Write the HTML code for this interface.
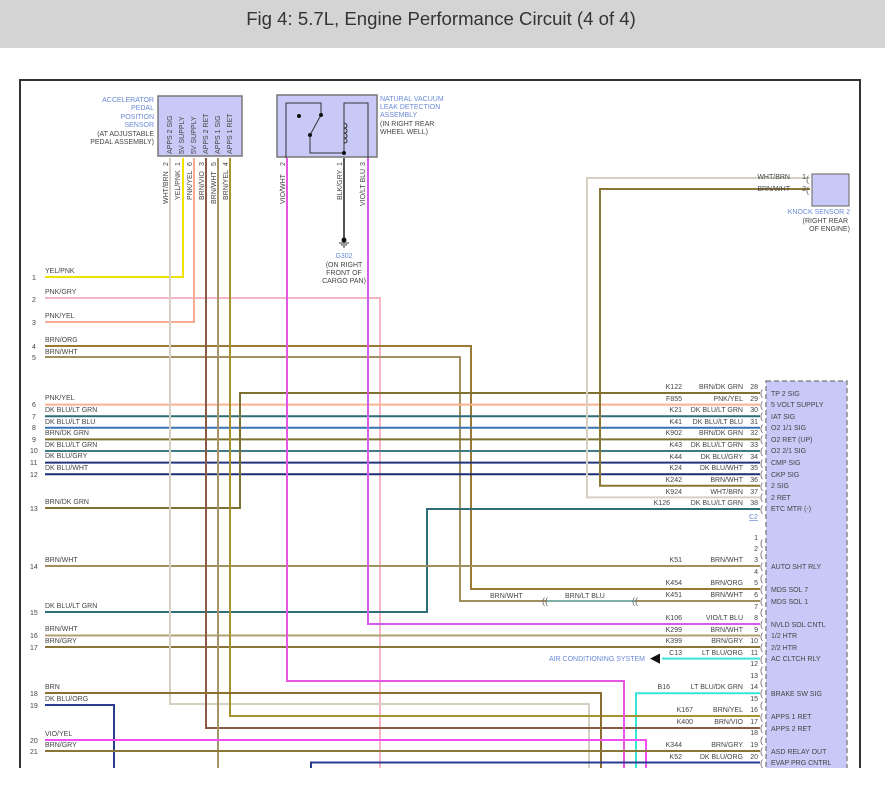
<!DOCTYPE html>
<html><head><meta charset="utf-8"><style>
html,body{margin:0;padding:0;background:#fff;width:885px;height:797px;overflow:hidden}
svg{display:block}
text{font-family:"Liberation Sans",sans-serif}
</style></head><body>
<svg width="885" height="797" viewBox="0 0 885 797" xmlns="http://www.w3.org/2000/svg">
<rect x="0" y="0" width="885" height="48" fill="#d4d4d4"/>
<text x="441" y="25" font-size="18.6" fill="#333" text-anchor="middle">Fig 4: 5.7L, Engine Performance Circuit (4 of 4)</text>
<defs><clipPath id="c"><rect x="20" y="80" width="840" height="688"/></clipPath></defs>
<g clip-path="url(#c)">
<rect x="766" y="381" width="81" height="400" fill="#c9c9f8" stroke="#888" stroke-width="1.5" stroke-dasharray="5,3"/>
<g fill="none" stroke-width="2">
<path d="M45 277H183V158" stroke="#f2e200"/>
<path d="M45 298H380V790" stroke="#f5b4c4"/>
<path d="M45 322H194V158" stroke="#f7ad94"/>
<path d="M45 346H471V589H760" stroke="#9a7a34"/>
<path d="M45 357H460V601H760" stroke="#a09060"/>
<path d="M547 601H635" stroke="#7fb0a8"/>
<path d="M45 404.6H760" stroke="#f9b28c"/>
<path d="M45 416.2H760" stroke="#2c6a78"/>
<path d="M45 427.8H760" stroke="#3a72b0"/>
<path d="M45 439.4H760" stroke="#7e7232"/>
<path d="M45 451H760" stroke="#3f7a86"/>
<path d="M45 462.6H760" stroke="#22347e"/>
<path d="M45 474.2H760" stroke="#1c2e74"/>
<path d="M760 393H240V508H45" stroke="#7e7232"/>
<path d="M760 485.8H600V189H810" stroke="#8c7636"/>
<path d="M760 497.4H587V178H810" stroke="#d6d0c2"/>
<path d="M760 509H427V612H45" stroke="#2f6e78"/>
<path d="M45 566H760" stroke="#a09060"/>
<path d="M368 158V624H760" stroke="#d45ce8"/>
<path d="M45 635.5H760" stroke="#b0a070"/>
<path d="M45 647H760" stroke="#8a7636"/>
<path d="M662 658.6H760" stroke="#3ee2dc"/>
<path d="M760 693.2H636V790" stroke="#36e6d8"/>
<path d="M170 158V704H589V790" stroke="#d6d0c2"/>
<path d="M206 158V728H760" stroke="#8a5a44"/>
<path d="M218 158V790" stroke="#a89468"/>
<path d="M230 158V716H760" stroke="#a8922e"/>
<path d="M287 158V681H624V790" stroke="#e656e6"/>
<path d="M45 693H601V790" stroke="#8c6e2e"/>
<path d="M45 705H114V790" stroke="#2a3c90"/>
<path d="M45 740H646V790" stroke="#f050f0"/>
<path d="M45 751H760" stroke="#8a7636"/>
<path d="M760 762.5H311V790" stroke="#2a3c90"/>
<path d="M344 158V238" stroke="#555"/>
</g>
</g>
<path d="M20 768V80H860V768" fill="none" stroke="#333" stroke-width="2"/>
<path d="M650 658.6L660 653.5V663.7Z" fill="#111"/>
<text x="645" y="661" font-size="7" fill="#6a8ad6" text-anchor="end">AIR CONDITIONING SYSTEM</text>
<text x="542" y="604" font-size="9" fill="#666">((</text>
<text x="632" y="604" font-size="9" fill="#666">((</text>
<text x="490" y="598" font-size="7" fill="#444">BRN/WHT</text>
<text x="565" y="598" font-size="7" fill="#444">BRN/LT BLU</text>
<rect x="158" y="96" width="84" height="60" fill="#c9c9f8" stroke="#777" stroke-width="1.5"/>
<g font-size="7" fill="#444">
<text transform="translate(172,154) rotate(-90)">APPS 2 SIG</text>
<text transform="translate(184,154) rotate(-90)">5V SUPPLY</text>
<text transform="translate(196,154) rotate(-90)">5V SUPPLY</text>
<text transform="translate(208,154) rotate(-90)">APPS 2 RET</text>
<text transform="translate(220,154) rotate(-90)">APPS 1 SIG</text>
<text transform="translate(232,154) rotate(-90)">APPS 1 RET</text>
<text transform="translate(168,166) rotate(-90)">2</text>
<text transform="translate(180,166) rotate(-90)">1</text>
<text transform="translate(192,166) rotate(-90)">6</text>
<text transform="translate(204,166) rotate(-90)">3</text>
<text transform="translate(216,166) rotate(-90)">5</text>
<text transform="translate(228,166) rotate(-90)">4</text>
<text transform="translate(168,204) rotate(-90)">WHT/BRN</text>
<text transform="translate(180,200) rotate(-90)">YEL/PNK</text>
<text transform="translate(192,200) rotate(-90)">PNK/YEL</text>
<text transform="translate(204,200) rotate(-90)">BRN/VIO</text>
<text transform="translate(216,204) rotate(-90)">BRN/WHT</text>
<text transform="translate(228,200) rotate(-90)">BRN/YEL</text>
<text transform="translate(285,204) rotate(-90)">VIO/WHT</text>
<text transform="translate(342,200) rotate(-90)">BLK/GRY</text>
<text transform="translate(365,206) rotate(-90)">VIO/LT BLU</text>
<text transform="translate(285,166) rotate(-90)">2</text>
<text transform="translate(342,166) rotate(-90)">1</text>
<text transform="translate(365,166) rotate(-90)">3</text>
</g>
<g font-size="7" text-anchor="end">
<text x="154" y="102" fill="#6a8ad6">ACCELERATOR</text>
<text x="154" y="110" fill="#6a8ad6">PEDAL</text>
<text x="154" y="119" fill="#6a8ad6">POSITION</text>
<text x="154" y="127" fill="#6a8ad6">SENSOR</text>
<text x="154" y="136" fill="#444">(AT ADJUSTABLE</text>
<text x="154" y="144" fill="#444">PEDAL ASSEMBLY)</text>
</g>
<rect x="277" y="95" width="100" height="62" fill="#c9c9f8" stroke="#777" stroke-width="1.5"/>
<g fill="none" stroke="#333" stroke-width="1">
<path d="M286 158V103H321V115L310 135V153H344"/>
<path d="M344 153V103H368V158"/>
</g>
<path d="M344 123c4 1 4 5 0 5c4 1 4 5 0 5c4 1 4 5 0 5c4 1 4 5 0 5" fill="none" stroke="#333" stroke-width="1"/>
<g fill="#111"><circle cx="299" cy="116" r="2"/><circle cx="321" cy="115" r="2"/><circle cx="310" cy="135" r="2"/><circle cx="344" cy="153" r="2"/><circle cx="344" cy="240" r="2.5"/></g>
<path d="M339 243H349M341 245H347M343 247H345" stroke="#333" stroke-width="1"/>
<g font-size="7">
<text x="380" y="101" fill="#6a8ad6">NATURAL VACUUM</text>
<text x="380" y="109" fill="#6a8ad6">LEAK DETECTION</text>
<text x="380" y="117" fill="#6a8ad6">ASSEMBLY</text>
<text x="380" y="126" fill="#444">(IN RIGHT REAR</text>
<text x="380" y="134" fill="#444">WHEEL WELL)</text>
<text x="344" y="258" fill="#6a8ad6" text-anchor="middle">G302</text>
<text x="344" y="267" fill="#444" text-anchor="middle">(ON RIGHT</text>
<text x="344" y="275" fill="#444" text-anchor="middle">FRONT OF</text>
<text x="344" y="283" fill="#444" text-anchor="middle">CARGO PAN)</text>
</g>
<rect x="812" y="174" width="37" height="32" fill="#c9c9f8" stroke="#777" stroke-width="1.2"/>
<g font-size="7" fill="#444">
<text x="790" y="179" text-anchor="end">WHT/BRN</text>
<text x="790" y="191" text-anchor="end">BRN/WHT</text>
<text x="806" y="179" text-anchor="end">1</text>
<text x="806" y="191" text-anchor="end">2</text>
<text x="850" y="214" text-anchor="end" fill="#6a8ad6">KNOCK SENSOR 2</text>
<text x="848" y="223" text-anchor="end">(RIGHT REAR</text>
<text x="850" y="231" text-anchor="end">OF ENGINE)</text>
</g>
<g font-size="7" fill="#444">
<text x="45" y="273">YEL/PNK</text><text x="32" y="280">1</text>
<text x="45" y="294">PNK/GRY</text><text x="32" y="302">2</text>
<text x="45" y="318">PNK/YEL</text><text x="32" y="325">3</text>
<text x="45" y="342">BRN/ORG</text><text x="32" y="349">4</text>
<text x="45" y="354">BRN/WHT</text><text x="32" y="360">5</text>
<text x="45" y="400">PNK/YEL</text><text x="32" y="407">6</text>
<text x="45" y="412">DK BLU/LT GRN</text><text x="32" y="419">7</text>
<text x="45" y="424">DK BLU/LT BLU</text><text x="32" y="430">8</text>
<text x="45" y="435">BRN/DK GRN</text><text x="32" y="442">9</text>
<text x="45" y="447">DK BLU/LT GRN</text><text x="30" y="453">10</text>
<text x="45" y="458">DK BLU/GRY</text><text x="30" y="465">11</text>
<text x="45" y="470">DK BLU/WHT</text><text x="30" y="477">12</text>
<text x="45" y="504">BRN/DK GRN</text><text x="30" y="511">13</text>
<text x="45" y="562">BRN/WHT</text><text x="30" y="569">14</text>
<text x="45" y="608">DK BLU/LT GRN</text><text x="30" y="615">15</text>
<text x="45" y="631">BRN/WHT</text><text x="30" y="638">16</text>
<text x="45" y="643">BRN/GRY</text><text x="30" y="650">17</text>
<text x="45" y="689">BRN</text><text x="30" y="696">18</text>
<text x="45" y="701">DK BLU/ORG</text><text x="30" y="708">19</text>
<text x="45" y="736">VIO/YEL</text><text x="30" y="743">20</text>
<text x="45" y="747">BRN/GRY</text><text x="30" y="754">21</text>
</g>
<g font-size="7" fill="#444">
<g text-anchor="end">
<text x="682" y="389">K122</text><text x="743" y="389">BRN/DK GRN</text><text x="758" y="389">28</text>
<text x="682" y="401">F855</text><text x="743" y="401">PNK/YEL</text><text x="758" y="401">29</text>
<text x="682" y="412">K21</text><text x="743" y="412">DK BLU/LT GRN</text><text x="758" y="412">30</text>
<text x="682" y="424">K41</text><text x="743" y="424">DK BLU/LT BLU</text><text x="758" y="424">31</text>
<text x="682" y="435">K902</text><text x="743" y="435">BRN/DK GRN</text><text x="758" y="435">32</text>
<text x="682" y="447">K43</text><text x="743" y="447">DK BLU/LT GRN</text><text x="758" y="447">33</text>
<text x="682" y="459">K44</text><text x="743" y="459">DK BLU/GRY</text><text x="758" y="459">34</text>
<text x="682" y="470">K24</text><text x="743" y="470">DK BLU/WHT</text><text x="758" y="470">35</text>
<text x="682" y="482">K242</text><text x="743" y="482">BRN/WHT</text><text x="758" y="482">36</text>
<text x="682" y="494">K924</text><text x="743" y="494">WHT/BRN</text><text x="758" y="494">37</text>
<text x="670" y="505">K126</text><text x="743" y="505">DK BLU/LT GRN</text><text x="758" y="505">38</text>
<text x="758" y="540">1</text><text x="758" y="551">2</text>
<text x="682" y="562">K51</text><text x="743" y="562">BRN/WHT</text><text x="758" y="562">3</text>
<text x="758" y="574">4</text>
<text x="682" y="585">K454</text><text x="743" y="585">BRN/ORG</text><text x="758" y="585">5</text>
<text x="682" y="597">K451</text><text x="743" y="597">BRN/WHT</text><text x="758" y="597">6</text>
<text x="758" y="609">7</text>
<text x="682" y="620">K106</text><text x="743" y="620">VIO/LT BLU</text><text x="758" y="620">8</text>
<text x="682" y="632">K299</text><text x="743" y="632">BRN/WHT</text><text x="758" y="632">9</text>
<text x="682" y="643">K399</text><text x="743" y="643">BRN/GRY</text><text x="758" y="643">10</text>
<text x="682" y="655">C13</text><text x="743" y="655">LT BLU/ORG</text><text x="758" y="655">11</text>
<text x="758" y="666">12</text><text x="758" y="678">13</text>
<text x="670" y="689">B16</text><text x="743" y="689">LT BLU/DK GRN</text><text x="758" y="689">14</text>
<text x="758" y="701">15</text>
<text x="693" y="712">K167</text><text x="743" y="712">BRN/YEL</text><text x="758" y="712">16</text>
<text x="693" y="724">K400</text><text x="743" y="724">BRN/VIO</text><text x="758" y="724">17</text>
<text x="758" y="735">18</text>
<text x="682" y="747">K344</text><text x="743" y="747">BRN/GRY</text><text x="758" y="747">19</text>
<text x="682" y="759">K52</text><text x="743" y="759">DK BLU/ORG</text><text x="758" y="759">20</text>
</g>
<text x="749" y="519" fill="#6a8ad6" text-decoration="underline">C2</text>
<text x="771" y="396">TP 2 SIG</text>
<text x="771" y="407">5 VOLT SUPPLY</text>
<text x="771" y="419">IAT SIG</text>
<text x="771" y="430">O2 1/1 SIG</text>
<text x="771" y="442">O2 RET (UP)</text>
<text x="771" y="453">O2 2/1 SIG</text>
<text x="771" y="465">CMP SIG</text>
<text x="771" y="477">CKP SIG</text>
<text x="771" y="488">2 SIG</text>
<text x="771" y="500">2 RET</text>
<text x="771" y="511">ETC MTR (-)</text>
<text x="771" y="569">AUTO SHT RLY</text>
<text x="771" y="592">MDS SOL 7</text>
<text x="771" y="604">MDS SOL 1</text>
<text x="771" y="627">NVLD SOL CNTL</text>
<text x="771" y="638">1/2 HTR</text>
<text x="771" y="650">2/2 HTR</text>
<text x="771" y="661">AC CLTCH RLY</text>
<text x="771" y="696">BRAKE SW SIG</text>
<text x="771" y="719">APPS 1 RET</text>
<text x="771" y="731">APPS 2 RET</text>
<text x="771" y="754">ASD RELAY OUT</text>
<text x="771" y="765">EVAP PRG CNTRL</text>
</g>
<g font-size="9" fill="#666">
<text x="760" y="396">(</text><text x="760" y="408">(</text><text x="760" y="419">(</text><text x="760" y="431">(</text><text x="760" y="442">(</text><text x="760" y="454">(</text><text x="760" y="466">(</text><text x="760" y="477">(</text><text x="760" y="489">(</text><text x="760" y="500">(</text><text x="760" y="512">(</text>
<text x="760" y="546">(</text><text x="760" y="557">(</text><text x="760" y="569">(</text><text x="760" y="581">(</text><text x="760" y="592">(</text><text x="760" y="604">(</text><text x="760" y="615">(</text><text x="760" y="627">(</text><text x="760" y="639">(</text><text x="760" y="650">(</text><text x="760" y="662">(</text><text x="760" y="673">(</text><text x="760" y="685">(</text><text x="760" y="696">(</text><text x="760" y="708">(</text><text x="760" y="720">(</text><text x="760" y="731">(</text><text x="760" y="743">(</text><text x="760" y="754">(</text><text x="760" y="766">(</text>
<text x="806" y="182">(</text><text x="806" y="193">(</text>
</g>
<rect x="0" y="769" width="885" height="28" fill="#fff"/>
</svg>
</body></html>
